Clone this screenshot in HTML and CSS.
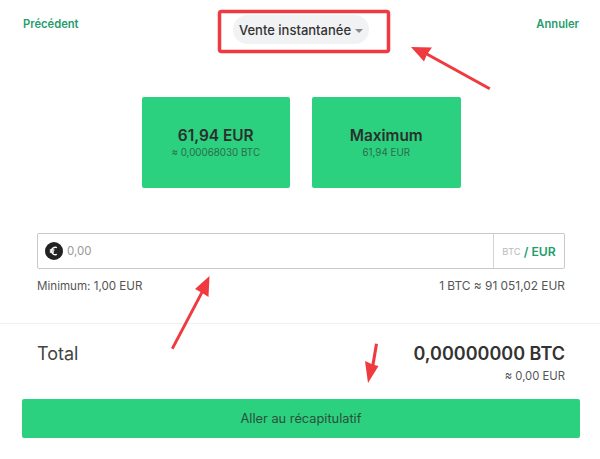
FILE: index.html
```html
<!DOCTYPE html>
<html lang="fr">
<head>
  <meta charset="UTF-8">
  <title>Vente instantanée</title>
  <link rel="stylesheet" href="styles.css">
</head>
<body>
  <header class="topbar">
    <a href="#" class="link">Précédent</a>
    <div class="mode"><span>Vente instantanée</span><i class="caret"></i></div>
    <a href="#" class="link link-end">Annuler</a>
  </header>

  <section class="quick">
    <div class="quick-card"><strong>61,94 EUR</strong><small>≈ 0,00068030 BTC</small></div>
    <div class="quick-card"><strong>Maximum</strong><small>61,94 EUR</small></div>
  </section>

  <section class="amount">
    <div class="field">
      <svg class="coin" width="18" height="18" viewBox="0 0 18 18">
        <circle cx="9" cy="9" r="9" fill="#222"/>
        <path d="M11.9 5.6A4 4 0 0 0 6.3 9a4 4 0 0 0 5.600 3.400M4.800 8h4.600M4.800 10h4.200" fill="none" stroke="#fff" stroke-width="1.300"/>
      </svg>
      <span class="placeholder">0,00</span>
      <div class="unit"><span class="unit-off">BTC</span> <b>/ EUR</b></div>
    </div>
    <div class="hints"><span>Minimum: 1,00 EUR</span><span class="rate">1 BTC ≈ 91 051,02 EUR</span></div>
  </section>

  <section class="total">
    <div class="total-label">Total</div>
    <div class="total-value"><strong>0,00000000 BTC</strong><small>≈ 0,00 EUR</small></div>
  </section>

  <div class="footer"><button class="submit">Aller au récapitulatif</button></div>

  <!-- annotations over the screenshot -->
  <svg class="notes" width="600" height="459" viewBox="0 0 600 459">
    <rect x="219.500" y="11.500" width="169" height="40" rx="2" fill="none" stroke="#ef3b3f" stroke-width="3.500"/>
    <g fill="#ef3b3f">
      <path d="M411 47 432 47.500 428 53 490.500 87.500 489 90 426.500 55.500 424 61.500Z"/>
      <path d="M209.500 276 208.500 297 203 293.500 173.500 349.500 171 348 200.500 292 195 289Z"/>
      <path d="M368 383 365 361 371.500 364 375 343.500 378 344 374.500 365 378.500 366Z"/>
    </g>
  </svg>
</body>
</html>
```

FILE: styles.css
```css
* { box-sizing: border-box; }
body {
  margin: 0;
  width: 600px;
  height: 459px;
  overflow: hidden;
  position: relative;
  background: #fff;
  color: #333;
  font-family: Inter, "Liberation Sans", sans-serif;
}
a { text-decoration: none; color: inherit; }
small { display: block; }

/* Top bar */
.topbar {
  display: grid;
  grid-template-columns: 1fr auto 1fr;
  align-items: start;
  padding: 15px 21px 0 23px;
  height: 97px;
}
.link {
  margin-top: 2px;
  font-size: 11.200px;
  line-height: 14px;
  font-weight: 600;
  color: #1f9d6c;
}
.link-end { justify-self: end; }
.mode {
  display: flex;
  align-items: center;
  gap: 4px;
  height: 29px;
  padding: 0 6px;
  border-radius: 15px;
  background: #f1f2f4;
  font-size: 13px;
  font-weight: 500;
  color: #333;
}
.caret {
  margin-top: 2px;
  border: 4px solid transparent;
  border-top-color: #888;
  border-bottom: 0;
}

/* Quick amounts */
.quick {
  display: flex;
  justify-content: center;
  gap: 22px;
  height: 136px;
  padding-left: 2px;
}
.quick-card {
  width: 148.500px;
  height: 91px;
  border-radius: 2px;
  background: #2bd17e;
  display: flex;
  flex-direction: column;
  align-items: center;
  justify-content: center;
}
.quick-card strong { font-size: 15.400px; line-height: 18px; font-weight: 600; color: #2b2f2d; }
.quick-card small { margin-top: 2px; font-size: 9.800px; line-height: 12px; color: #2e6b4c; }

/* Amount field */
.amount { padding: 0 35px 0 37px; height: 90px; }
.field {
  display: flex;
  align-items: center;
  height: 36px;
  border: 1px solid #c9c9c9;
  border-radius: 2px;
  padding-left: 7px;
}
.coin { flex: none; }
.placeholder { margin-left: 4px; flex: 1; font-size: 11.500px; color: #999; }
.unit {
  align-self: stretch;
  width: 71px;
  border-left: 1px solid #d4d4d4;
  display: flex;
  align-items: center;
  justify-content: center;
  gap: 3px;
  font-size: 12.200px;
  color: #1f9d6c;
}
.unit-off { font-size: 9.500px; color: #bbb; }
.unit b { font-weight: 600; }
.hints {
  display: flex;
  justify-content: space-between;
  margin-top: 10px;
  font-size: 11.600px;
  line-height: 14px;
  color: #555;
}
.rate { font-size: 11.900px; }

/* Total */
.total {
  height: 76px;
  border-top: 1px solid #f1f1f1;
  padding: 19px 35px 0 37px;
  display: flex;
  justify-content: space-between;
  align-items: flex-start;
}
.total-label { font-size: 18px; line-height: 21px; color: #444; }
.total-value { text-align: right; }
.total-value strong { display: block; font-size: 18px; line-height: 21px; font-weight: 600; color: #333; }
.total-value small { margin-top: 5px; font-size: 11.300px; line-height: 14px; color: #555; }

/* Submit */
.footer { padding: 0 20px 0 22px; }
.submit {
  display: block;
  width: 100%;
  height: 39px;
  border: none;
  border-radius: 2px;
  background: #2bd17e;
  color: #2b4f3d;
  font-family: inherit;
  font-size: 12.800px;
  font-weight: 400;
}

/* Annotations */
.notes { position: absolute; left: 0; top: 0; pointer-events: none; }
```
